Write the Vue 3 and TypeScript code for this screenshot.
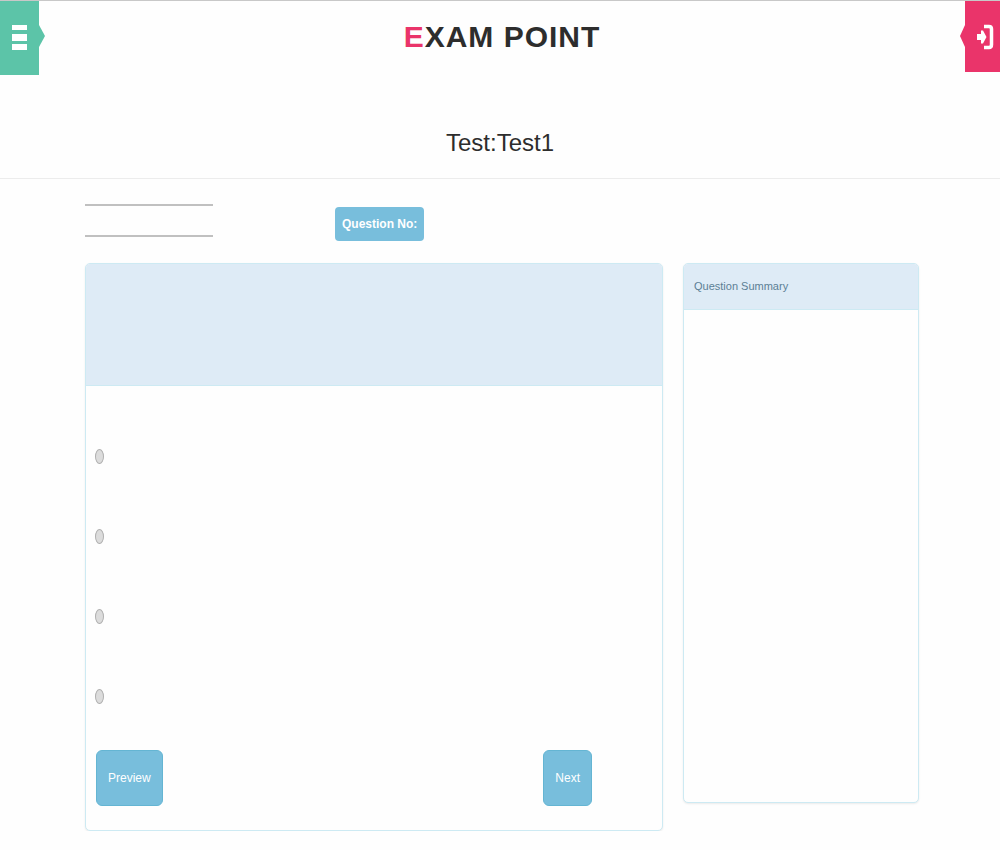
<script setup lang="ts">
import { ref } from 'vue'

const options = ['Option 1', 'Option 2', 'Option 3', 'Option 4']
const selected = ref<number | null>(null)
</script>

<template>
  <div class="page">
    <header class="topbar">
      <button class="tab menu" type="button" aria-label="Menu">
        <svg width="15" height="26" viewBox="0 0 15 26" fill="#fff" aria-hidden="true">
          <rect y="0" width="15" height="5" />
          <rect y="9" width="15" height="7" />
          <rect y="19" width="15" height="6" />
        </svg>
      </button>
      <h1 class="brand"><span>E</span>XAM POINT</h1>
      <button class="tab login" type="button" aria-label="Log in">
        <svg width="18" height="26" viewBox="0 0 18 26" aria-hidden="true">
          <path d="M8 2.500H13Q15.500 2.500 15.500 5V20.500Q15.500 23.500 13 23.500H8" fill="none" stroke="#fff" stroke-width="3.500" />
          <path d="M1 10H5V6.500H7L10.500 13L7 19.500H5V16H1Z" fill="#fff" />
        </svg>
      </button>
    </header>

    <h2 class="test-title">Test:Test1</h2>

    <main class="content">
      <div class="status">
        <div class="timer"></div>
        <div class="badge">Question No:</div>
      </div>

      <div class="columns">
        <form class="panel question" @submit.prevent>
          <div class="question-head"></div>
          <div class="options">
            <label v-for="(name, i) in options" :key="name" class="option">
              <input v-model="selected" type="radio" name="answer" :value="i" :aria-label="name" />
            </label>
          </div>
          <div class="actions">
            <button class="btn" type="button">Preview</button>
            <button class="btn" type="button">Next</button>
          </div>
        </form>

        <aside class="panel summary">
          <h3 class="summary-head">Question Summary</h3>
          <div class="summary-body"></div>
        </aside>
      </div>
    </main>
  </div>
</template>

<style>
body {
  margin: 0;
  background: #fefefe;
}
</style>

<style scoped>
.page {
  border-top: 1px solid #c8c8c8;
  font-family: "Liberation Sans", Arial, sans-serif;
  color: #2d2d2d;
}
.page * {
  box-sizing: border-box;
}
.topbar {
  display: grid;
  grid-template-columns: 1fr auto 1fr;
  align-items: start;
}
.tab {
  position: relative;
  display: flex;
  align-items: center;
  justify-content: center;
  padding: 0;
  border: 0;
}
.tab::after {
  content: "";
  position: absolute;
  top: 24px;
  border: solid transparent;
  border-width: 11px 0;
}
.menu {
  width: 39px;
  height: 74px;
  background: #5cc4a8;
}
.menu::after {
  left: 100%;
  border-left: 6px solid #5cc4a8;
}
.login {
  justify-self: end;
  width: 35px;
  height: 71px;
  padding-left: 5px;
  background: #ea346a;
}
.login::after {
  right: 100%;
  border-right: 5px solid #ea346a;
}
.brand {
  margin: 0;
  padding-left: 4px;
  font-size: 30px;
  line-height: 72px;
  font-weight: 700;
  letter-spacing: 1px;
}
.brand span {
  color: #ea346a;
}
.test-title {
  margin: 33px 0 0;
  border-bottom: 1px solid #ececec;
  font-size: 24px;
  line-height: 70px;
  font-weight: 400;
  text-align: center;
}
.content {
  padding: 25px 8.1% 0 8.5%;
}
.status {
  display: flex;
  align-items: flex-start;
}
.timer {
  width: 128px;
  height: 33px;
  border: solid #c0c0c0;
  border-width: 2px 0;
}
.badge {
  margin: 3px 0 0 122px;
  padding: 0 7px;
  border-radius: 4px;
  background: #78bedc;
  color: #fff;
  font-size: 12px;
  line-height: 34px;
  font-weight: 700;
}
.columns {
  display: grid;
  grid-template-columns: 578fr 236fr;
  gap: 20px;
  align-items: start;
  margin-top: 22px;
}
.panel {
  overflow: hidden;
  border: 1px solid #cdeaf3;
  border-radius: 5px;
  background: #fefefe;
  box-shadow: 0 1px 2px #00000014;
}
.question-head {
  height: 122px;
  border-bottom: 1px solid #cdeaf3;
  background: #deebf6;
}
.options {
  padding: 30px 9px 0;
}
.option {
  display: flex;
  align-items: center;
  height: 80px;
}
.option input {
  appearance: none;
  width: 9px;
  height: 15px;
  margin: 0;
  border: 1px solid #b0b0b0;
  border-radius: 50%;
  background: #dcdcdc;
}
.option input:checked {
  background: #555;
}
.actions {
  display: flex;
  justify-content: space-between;
  padding: 14px 70px 24px 10px;
}
.btn {
  height: 56px;
  padding: 0 11px;
  border: 1px solid #64b5d3;
  border-radius: 6px;
  background: #78bedc;
  color: #fff;
  font: inherit;
  font-size: 12px;
}
.summary-head {
  margin: 0;
  padding: 0 10px;
  border-bottom: 1px solid #cdeaf3;
  background: #deebf6;
  color: #5c7f95;
  font-size: 11px;
  line-height: 45px;
  font-weight: 400;
}
.summary-body {
  height: 492px;
}
</style>
